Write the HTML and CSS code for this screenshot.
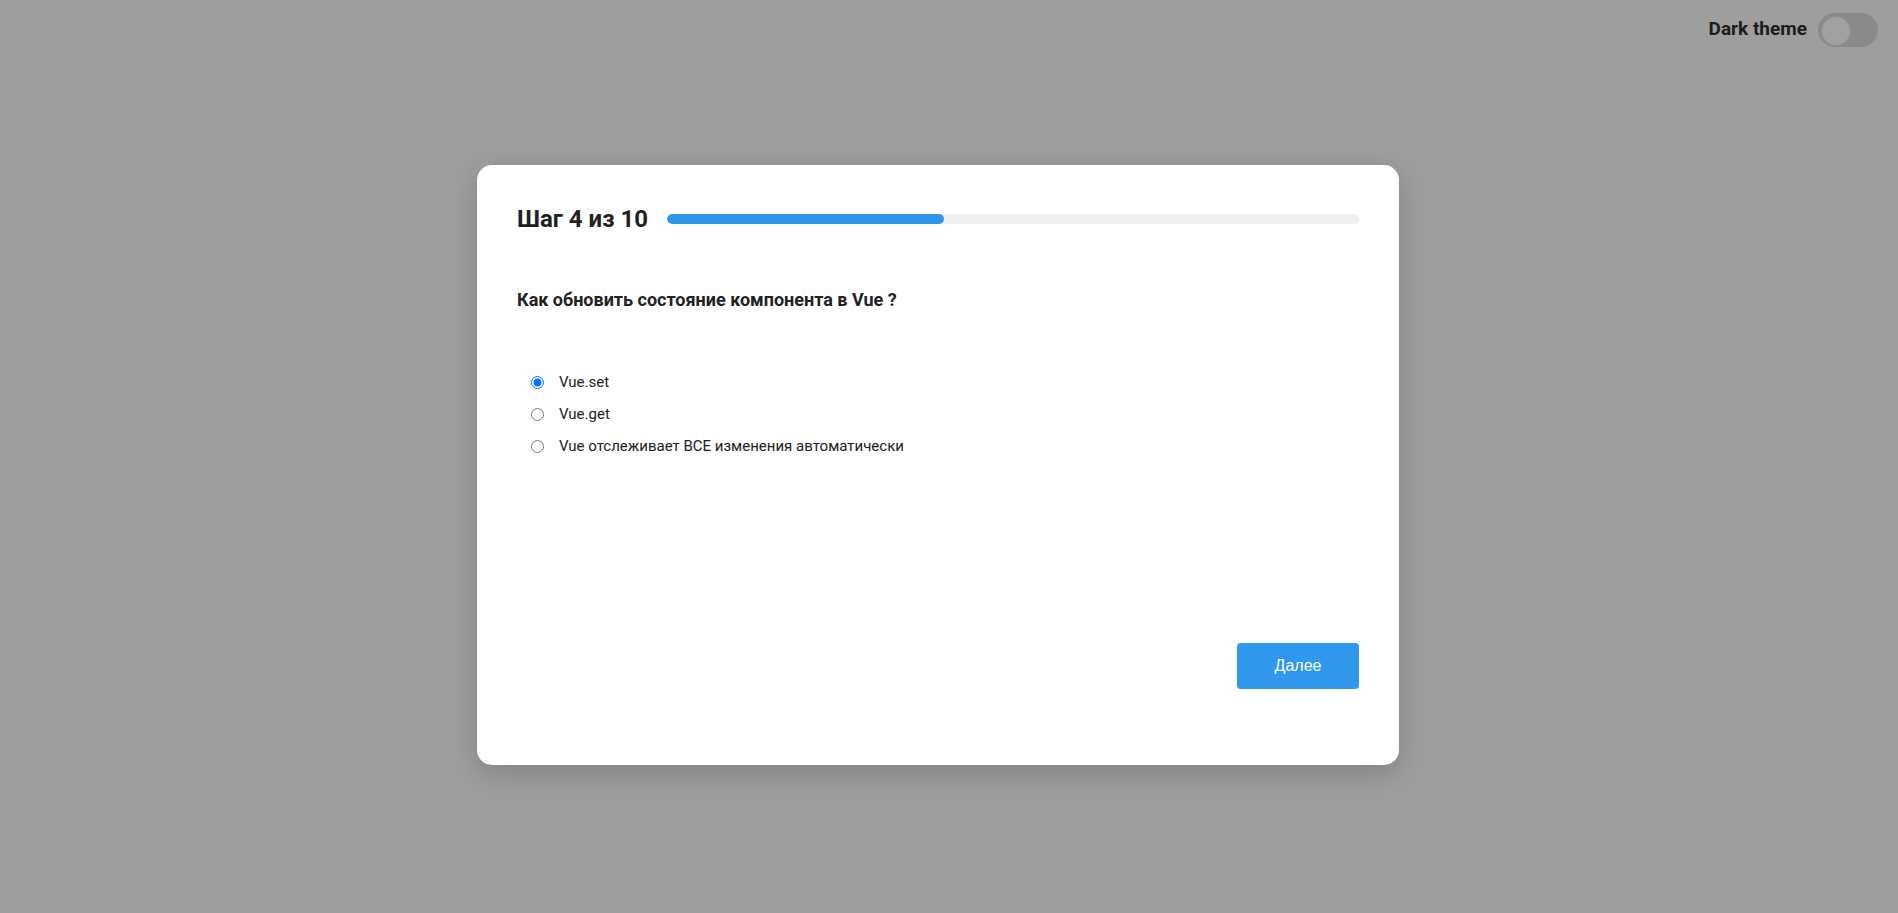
FILE: index.html
```html
<!DOCTYPE html>
<html lang="ru">
<head>
<meta charset="utf-8">
<title>Quiz</title>
<link rel="stylesheet" href="styles.css">
</head>
<body>
<header class="topbar">
  <span class="theme-label">Dark theme</span>
  <label class="switch">
    <input type="checkbox">
    <span class="slider"></span>
  </label>
</header>
<main class="stage">
  <section class="card">
    <div class="step-row">
      <h2 class="step-title">Шаг 4 из 10</h2>
      <div class="progress"><div class="progress-fill" style="width: 40%"></div></div>
    </div>
    <h3 class="question">Как обновить состояние компонента в Vue ?</h3>
    <ul class="options">
      <li class="option"><label class="option-label"><input type="radio" name="q" checked><span>Vue.set</span></label></li>
      <li class="option"><label class="option-label"><input type="radio" name="q"><span>Vue.get</span></label></li>
      <li class="option"><label class="option-label"><input type="radio" name="q"><span>Vue отслеживает ВСЕ изменения автоматически</span></label></li>
    </ul>
    <div class="footer">
      <button class="next-btn" type="button">Далее</button>
    </div>
  </section>
</main>
</body>
</html>
```
FILE: styles.css
```css
* { box-sizing: border-box; }
html, body { margin: 0; padding: 0; }
body {
  background: #9e9e9e;
  font-family: Roboto, "Noto Sans", sans-serif;
  color: #222;
  min-height: 913px;
}
.topbar {
  display: flex;
  justify-content: flex-end;
  align-items: center;
  gap: 11px;
  padding: 13px 20px 0 0;
  height: 47px;
}
.theme-label {
  font-size: 19px;
  font-weight: 700;
  color: #1c1c1c;
  line-height: 22px;
  margin-top: -2px;
}
.switch {
  position: relative;
  display: inline-block;
  width: 60px;
  height: 34px;
}
.switch input { display: none; }
.slider {
  position: absolute;
  inset: 0;
  background: #8a8a8a;
  border-radius: 17px;
}
.slider::before {
  content: "";
  position: absolute;
  left: 3px;
  top: 3px;
  width: 28px;
  height: 28px;
  border-radius: 50%;
  background: #a1a1a1;
  border: 1px solid #8f8f8f;
}
.stage {
  padding-top: 118px;
  padding-left: 477px;
}
.card {
  width: 922px;
  height: 600px;
  background: #fff;
  border-radius: 15px;
  box-shadow: 0 8px 28px rgba(0, 0, 0, 0.18);
  padding: 40px 40px 76px;
  display: flex;
  flex-direction: column;
}
.step-row {
  display: flex;
  align-items: center;
  gap: 19px;
}
.step-title {
  margin: 0;
  font-size: 24px;
  font-weight: 700;
  color: #222;
  white-space: nowrap;
}
.progress {
  flex: 1;
  height: 10px;
  background: #efefef;
  border-radius: 5px;
  overflow: hidden;
}
.progress-fill {
  height: 100%;
  background: #2f95e9;
  border-radius: 5px;
}
.question {
  margin: 56px 0 0;
  font-size: 18px;
  font-weight: 700;
  color: #222;
}
.options {
  list-style: none;
  margin: 63px 0 0;
  padding: 0 0 0 14px;
  display: flex;
  flex-direction: column;
  gap: 14px;
}
.option-label {
  display: flex;
  align-items: center;
  gap: 15px;
  font-size: 15px;
  color: #222;
}
.option-label input {
  margin: 0;
  width: 13px;
  height: 13px;
}
.footer {
  margin-top: auto;
  display: flex;
  justify-content: flex-end;
}
.next-btn {
  width: 122px;
  height: 46px;
  border: none;
  border-radius: 4px;
  background: #2f98ec;
  color: #fff;
  font-family: "Liberation Sans", Arial, sans-serif;
  font-size: 16px;
}
```
